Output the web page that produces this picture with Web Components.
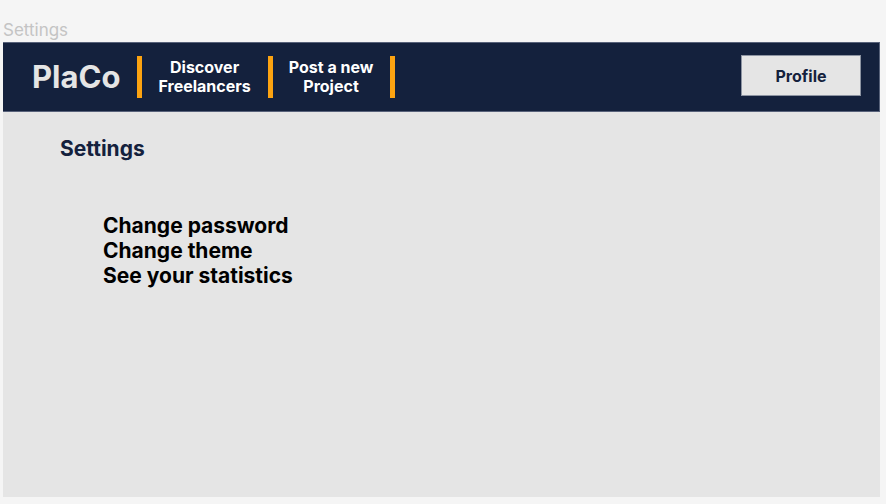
<!DOCTYPE html>
<html lang="en">
<head>
<meta charset="utf-8">
<title>Settings</title>
<style>
html, body { height: 100%; }
body { margin: 0; background: #f5f5f5; font-family: Inter, "Liberation Sans", sans-serif; font-optical-sizing: none; }
</style>
</head>
<body>
<app-frame label="Settings">
  <site-header slot="header" brand="PlaCo">
    <nav-item href="#discover">Discover<br>Freelancers</nav-item>
    <nav-item href="#post">Post a new<br>Project</nav-item>
    <profile-button slot="action">Profile</profile-button>
  </site-header>
  <settings-panel heading="Settings">
    <settings-link href="#password">Change password</settings-link>
    <settings-link href="#theme">Change theme</settings-link>
    <settings-link href="#statistics">See your statistics</settings-link>
  </settings-panel>
</app-frame>
<script>
function define(name, render) {
  customElements.define(name, class extends HTMLElement {
    constructor() {
      super();
      this.attachShadow({ mode: "open" });
    }
    connectedCallback() {
      this.shadowRoot.innerHTML = render(this);
    }
  });
}

define("app-frame", el => `
<style>
:host { display: flex; flex-direction: column; box-sizing: border-box; min-height: 100vh; padding: 20px 6px 7px 3px; }
.label { font-size: 17px; line-height: 20px; color: #c4c4c4; padding-bottom: 2px; }
.frame { flex: 1; background: #e5e5e5; }
</style>
<div class="label">${el.getAttribute("label")}</div>
<div class="frame"><slot name="header"></slot><main><slot></slot></main></div>`);

define("site-header", el => `
<style>
:host { display: block; background: #14213d; border: 1px solid #58627a; border-width: 1px 1px 1px 0; box-sizing: border-box; }
header { display: flex; align-items: center; min-height: 68px; padding: 0 18px 0 29px; box-sizing: border-box; }
.brand { color: #e5e5e5; font-size: 31px; line-height: 40px; font-weight: 700; text-decoration: none; margin-right: 17px; }
nav { display: flex; align-items: center; }
nav::before { content: ""; width: 5px; height: 42px; background: #fca311; }
.action { margin-left: auto; padding-bottom: 3px; }
</style>
<header><a class="brand" href="#home">${el.getAttribute("brand")}</a><nav><slot></slot></nav><div class="action"><slot name="action"></slot></div></header>`);

define("nav-item", el => `
<style>
:host { display: flex; align-items: center; }
:host::after { content: ""; width: 5px; height: 42px; background: #fca311; }
a { color: #fff; font-size: 16px; line-height: 19px; font-weight: 700; font-optical-sizing: auto; text-align: center; text-decoration: none; padding: 0 17px 0 16px; }
</style>
<a href="${el.getAttribute("href")}"><slot></slot></a>`);

define("profile-button", () => `
<style>
:host { display: block; }
button { width: 120px; height: 41px; padding: 0; border: 1px solid #8d94a2; background: #e5e5e5; color: #14213d; font: 700 16px/20px Inter, "Liberation Sans", sans-serif; font-optical-sizing: auto; cursor: pointer; }
</style>
<button type="button"><slot></slot></button>`);

define("settings-panel", el => `
<style>
:host { display: block; padding: 24px 57px; }
h1 { margin: 0 0 52px; color: #14213d; font-size: 21px; line-height: 25px; font-weight: 700; }
nav { display: flex; flex-direction: column; align-items: flex-start; padding-left: 43px; }
</style>
<h1>${el.getAttribute("heading")}</h1><nav><slot></slot></nav>`);

define("settings-link", el => `
<style>
:host { display: block; }
a { display: block; color: #000; font-size: 21px; line-height: 25px; font-weight: 700; font-optical-sizing: auto; text-decoration: none; }
</style>
<a href="${el.getAttribute("href")}"><slot></slot></a>`);
</script>
</body>
</html>
